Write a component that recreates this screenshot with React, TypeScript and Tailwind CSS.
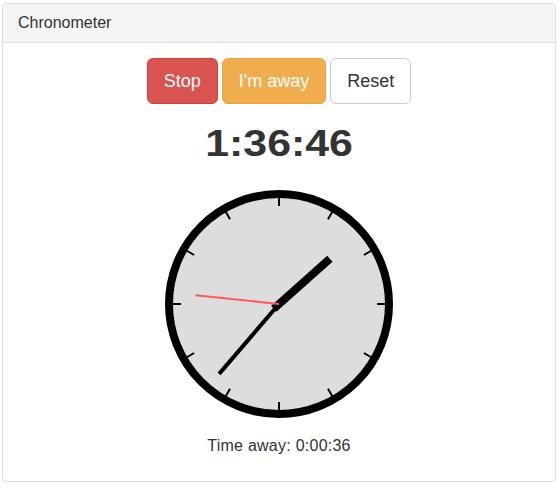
const font = { fontFamily: '"Liberation Sans", Arial, sans-serif' }

function Clock() {
  const ticks = Array.from({ length: 12 }, (_, i) => i * 30)
  return (
    <svg width="240" height="240" viewBox="0 0 240 240" className="mt-[11px]">
      <circle cx="120" cy="120" r="110" fill="#dddddd" stroke="#000" strokeWidth="8" />
      {ticks.map((a) => (
        <line
          key={a}
          x1="120"
          y1="12"
          x2="120"
          y2="22"
          stroke="#000"
          strokeWidth="2"
          transform={`rotate(${a} 120 120)`}
        />
      ))}
      {/* minute */}
      <line x1="120" y1="120" x2="120" y2="28" stroke="#000" strokeWidth="4" transform="rotate(220.6 120 120)" />
      {/* hour */}
      <line x1="120" y1="127" x2="120" y2="52" stroke="#000" strokeWidth="8" transform="rotate(48.4 120 120)" />
      {/* second */}
      <line x1="120" y1="120" x2="120" y2="36" stroke="#ff5a5a" strokeWidth="2" transform="rotate(276 120 120)" />
    </svg>
  )
}

export default function App() {
  return (
    <div className="bg-white w-[559px] h-[488px] pt-[3px] pl-[2px] text-[#333]" style={font}>
      <div className="w-[554px] h-[479px] border border-[#dddddd] rounded-[4px] overflow-hidden">
        <div className="bg-[#f5f5f5] border-b border-[#dddddd] px-[15px] py-[10px]">
          <h3 className="text-[16px] leading-[1.1] text-[#333]">Chronometer</h3>
        </div>
        <div className="p-[15px] flex flex-col items-center">
          <div className="flex gap-[4px]">
            <button className="px-[16px] py-[10px] text-[18px] leading-[24px] rounded-[6px] border border-[#d43f3a] bg-[#d9534f] text-white">
              Stop
            </button>
            <button className="px-[16px] py-[10px] text-[18px] leading-[24px] rounded-[6px] border border-[#eea236] bg-[#f0ad4e] text-white">
              I'm away
            </button>
            <button className="px-[16px] py-[10px] text-[18px] leading-[24px] rounded-[6px] border border-[#cccccc] bg-white text-[#333]">
              Reset
            </button>
          </div>
          <h1 className="mt-[20px] mb-[10px] text-[36px] leading-[1.1] font-bold scale-x-[1.19]">1:36:46</h1>
          <Clock />
          <p className="mt-[11px] text-[16px] leading-[1.42857] tracking-[0.25px]">Time away: 0:00:36</p>
        </div>
      </div>
    </div>
  )
}
